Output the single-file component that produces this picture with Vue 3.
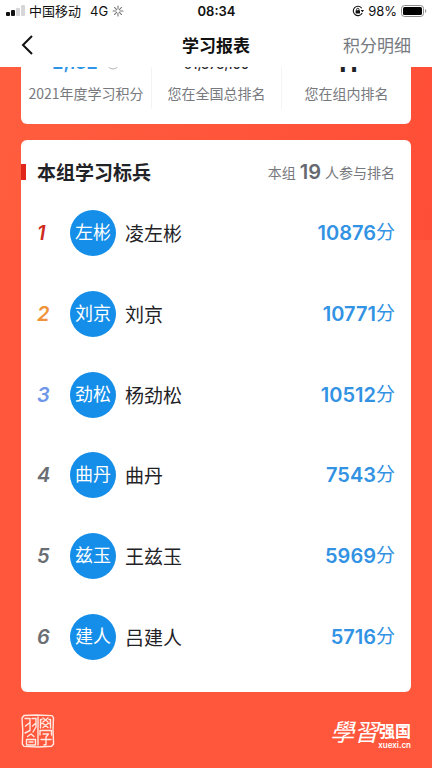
<script setup>
const summary = [
  { label: '2021年度学习积分', value: '2,132', kind: 'points', info: true },
  { label: '您在全国总排名', value: '61,373,100', kind: 'national' },
  { label: '您在组内排名', value: '11', kind: 'group' },
]
const members = [
  { short: '左彬', name: '凌左彬', score: 10876 },
  { short: '刘京', name: '刘京', score: 10771 },
  { short: '劲松', name: '杨劲松', score: 10512 },
  { short: '曲丹', name: '曲丹', score: 7543 },
  { short: '兹玉', name: '王兹玉', score: 5969 },
  { short: '建人', name: '吕建人', score: 5716 },
]
const spokes = [0, 45, 90, 135, 180, 225, 270, 315]
</script>

<template>
  <div class="page">
    <header class="top">
      <div class="status">
        <div class="status-side">
          <svg class="signal" width="19" height="12" viewBox="0 0 19 12" aria-hidden="true">
            <rect x="0" y="7" width="4" height="4" rx="1" fill="#111" />
            <rect x="5" y="5" width="4" height="6" rx="1" fill="#111" />
            <rect x="10" y="3" width="4" height="8" rx="1" fill="#d6d6d8" />
            <rect x="15" y="0" width="4" height="11" rx="1" fill="#d6d6d8" />
          </svg>
          <span class="carrier">中国移动</span>
          <span class="network">4G</span>
          <svg width="12" height="12" viewBox="0 0 12 12" aria-hidden="true">
            <path v-for="a in spokes" :key="a" d="M6 1V4" :transform="`rotate(${a} 6 6)`" stroke="#777" stroke-width="1.1" stroke-linecap="round" />
          </svg>
        </div>
        <time class="clock">08:34</time>
        <div class="status-side right">
          <svg width="12" height="12" viewBox="0 0 12 12" fill="none" aria-hidden="true">
            <path d="M9.8 3.2A4.7 4.7 0 1 0 10.2 8" stroke="#111" stroke-width="1.1" />
            <path d="M8.600 5h3.400L10.400 7.300z" fill="#111" />
            <rect x="3.600" y="5.300" width="4.400" height="3.200" rx=".5" fill="#111" />
            <path d="M4.600 5.500V4.500a1.200 1.200 0 0 1 2.400 0v1" stroke="#111" stroke-width=".9" />
          </svg>
          <span class="percent">98%</span>
          <svg width="26" height="12" viewBox="0 0 26 12" aria-hidden="true">
            <rect x=".5" y=".5" width="22" height="11" rx="3" fill="none" stroke="#8c8c8c" />
            <rect x="2" y="2" width="19" height="8" rx="1.6" fill="#000" />
            <path d="M24 4v4q1.300-.5 1.300-2t-1.300-2" fill="#999" />
          </svg>
        </div>
      </div>
      <nav class="nav">
        <button class="back" type="button" aria-label="返回">
          <svg width="12" height="20" viewBox="0 0 12 20" fill="none" aria-hidden="true">
            <path d="M11 1 2 10l9 9" stroke="#111" stroke-width="2" />
          </svg>
        </button>
        <h1>学习报表</h1>
        <a class="detail" href="#detail">积分明细</a>
      </nav>
    </header>

    <main class="content">
      <section class="card summary">
        <div v-for="item in summary" :key="item.label" class="stat">
          <div class="value" :class="item.kind">
            {{ item.value }}
            <svg v-if="item.info" width="14" height="14" viewBox="0 0 14 14" fill="none" aria-hidden="true">
              <circle cx="7" cy="7" r="6" stroke="#b3b3b3" />
            </svg>
          </div>
          <div class="label">{{ item.label }}</div>
        </div>
      </section>

      <section class="card ranking">
        <div class="ranking-head">
          <h2>本组学习标兵</h2>
          <p>本组 <strong>19</strong> 人参与排名</p>
        </div>
        <ol>
          <li v-for="(m, i) in members" :key="m.name">
            <span class="rank" :class="`rank-${i + 1}`">{{ i + 1 }}</span>
            <span class="avatar">{{ m.short }}</span>
            <span class="name">{{ m.name }}</span>
            <span class="score"><b>{{ m.score }}</b>分</span>
          </li>
        </ol>
      </section>
    </main>

    <footer class="foot">
      <svg width="34" height="34" viewBox="0 0 34 34" fill="none" stroke="#ffe9e2" stroke-width="1.400" stroke-linecap="round" stroke-linejoin="round" aria-hidden="true">
        <path d="M3 1.500 15 1l16 .6 1.500 2L32 16l.6 14-2 2.300L17 33l-14-.6L1.300 30l.5-13L1 4z" />
        <path d="M4 4.500h5v4L4.500 12M9 8.500v8L4 19m7-14.500h4V13l-3 5m3-9-3.500 3M6.500 22.500 10 20l3 2.500M5.500 25.500h9V31h-9zM8 28h4M17 3v28" />
        <path d="M19.500 5.500V14M29.500 5.500V14M22 4l5 4m0-4-5 4m0 1.500 5 4m0-4-5 4M19.500 5.500H21m-1.500 4H21m7-4h1.500m-1.500 4h1.500M19 21v-4.500h11.500V21M22 20h5.500L25 23v7.500l-2 .5M20 25.500h10" />
      </svg>
      <div class="brand">
        <span class="brush" lang="zh-Hant">學習</span>
        <span class="brand-side">
          <span class="brand-name">强国</span>
          <span class="domain">xuexi.cn</span>
        </span>
      </div>
    </footer>
  </div>
</template>

<style>
body {
  margin: 0;
  background: #ff573b;
}
</style>

<style scoped>
* {
  box-sizing: border-box;
}
.page {
  min-height: 100vh;
  display: flex;
  flex-direction: column;
  font-family: Inter, "Noto Sans CJK SC", sans-serif;
  color: #1f2226;
  background: linear-gradient(100deg, #ff5e3e, #ff4e37) top / 100% 240px no-repeat #ff573b;
}
.top {
  background: #fff;
  color: #111;
}
.status {
  height: 22px;
  padding: 0 5px 0 6px;
  display: grid;
  grid-template-columns: 1fr auto 1fr;
  align-items: center;
  font-size: 13px;
  line-height: 22px;
}
.status-side {
  display: flex;
  align-items: center;
  gap: 4px;
}
.right {
  justify-content: flex-end;
}
.network {
  margin-left: 5px;
}
.clock {
  font-weight: 600;
}
.nav {
  height: 45px;
  padding: 0 21px;
  display: grid;
  grid-template-columns: 1fr auto 1fr;
  align-items: center;
  font-family: "Noto Sans CJK SC", sans-serif;
}
.back {
  justify-self: start;
  display: flex;
  padding: 0;
  border: 0;
  background: none;
}
h1,
h2,
p,
ol {
  margin: 0;
  padding: 0;
}
h1 {
  font-size: 17px;
  font-weight: 700;
}
.detail {
  justify-self: end;
  font-size: 17px;
  color: #777a80;
  text-decoration: none;
}
.content {
  padding: 0 21px;
  display: flex;
  flex-direction: column;
  gap: 16px;
}
.card {
  background: #fff;
  border-radius: 6px;
}
.summary {
  height: 57px;
  padding-bottom: 15px;
  display: grid;
  grid-template-columns: repeat(3, 1fr);
  grid-template-rows: minmax(0, 1fr);
  border-radius: 0 0 6px 6px;
  overflow: hidden;
}
.stat {
  padding-bottom: 6px;
  display: flex;
  flex-direction: column;
  align-items: center;
  justify-content: flex-end;
}
.stat + .stat {
  border-left: 1px solid #f4f4f5;
}
.value {
  flex: none;
  display: flex;
  align-items: center;
  gap: 8px;
  height: 24px;
  margin-bottom: 8px;
  line-height: 24px;
  font-weight: 600;
}
.points {
  font-size: 18px;
  color: #2e94e6;
}
.national {
  font-size: 13px;
  line-height: 22px;
  align-items: flex-end;
  font-weight: 500;
}
.group {
  font-size: 26px;
  font-weight: 700;
}
.label {
  flex: none;
  font-family: "Noto Sans CJK SC", sans-serif;
  font-size: 14px;
  line-height: 20px;
  color: #77797e;
  white-space: nowrap;
}
.ranking {
  padding-bottom: 15px;
}
.ranking-head {
  height: 53px;
  padding: 10px 16px 0 0;
  display: flex;
  align-items: center;
  justify-content: space-between;
}
h2 {
  display: flex;
  align-items: center;
  gap: 11px;
  font-family: "Noto Sans CJK SC", sans-serif;
  font-size: 19px;
  font-weight: 700;
  line-height: 28px;
}
h2::before {
  content: "";
  width: 5px;
  height: 16px;
  background: #e0251b;
}
.ranking-head p {
  display: flex;
  align-items: center;
  gap: 4px;
  font-family: "Noto Sans CJK SC", sans-serif;
  font-size: 14px;
  color: #77797e;
}
.ranking-head strong {
  font-family: Inter, sans-serif;
  font-size: 20px;
  font-weight: 600;
  color: #66696f;
}
ol {
  height: 484px;
  display: grid;
  grid-auto-rows: 1fr;
  list-style: none;
}
li {
  padding: 0 16px;
  display: flex;
  align-items: center;
}
.rank {
  width: 33px;
  font-size: 20px;
  font-style: italic;
  font-weight: 600;
  color: #6a6e73;
}
.rank-1 {
  color: #cf2b20;
}
.rank-2 {
  color: #f0923a;
}
.rank-3 {
  color: #7096e8;
}
.avatar {
  width: 46px;
  height: 46px;
  border-radius: 50%;
  background: #148ee8;
  color: #fff;
  font-size: 18px;
  line-height: 46px;
  text-align: center;
}
.name {
  flex: 1;
  margin-left: 9px;
  font-family: "Noto Sans CJK SC", sans-serif;
  font-size: 19px;
  line-height: 26px;
}
.score {
  display: flex;
  align-items: center;
  font-size: 19px;
  line-height: 28px;
  color: #3292e3;
}
.score b {
  font-size: 20px;
  font-weight: 600;
}
.foot {
  padding: 20px 21px;
  display: flex;
  align-items: center;
  justify-content: space-between;
  color: #fff;
}
.brand {
  display: flex;
  align-items: center;
}
.brush {
  font-family: "Noto Sans CJK TC", sans-serif;
  font-size: 24px;
  line-height: 38px;
  font-style: italic;
}
.brand-side {
  display: flex;
  flex-direction: column;
  align-items: flex-end;
  padding-top: 8px;
}
.brand-name {
  font-family: "Noto Sans CJK SC", sans-serif;
  font-size: 16px;
  line-height: 20px;
  font-weight: 700;
}
.domain {
  font-size: 8px;
  line-height: 10px;
  font-weight: 600;
}
</style>
